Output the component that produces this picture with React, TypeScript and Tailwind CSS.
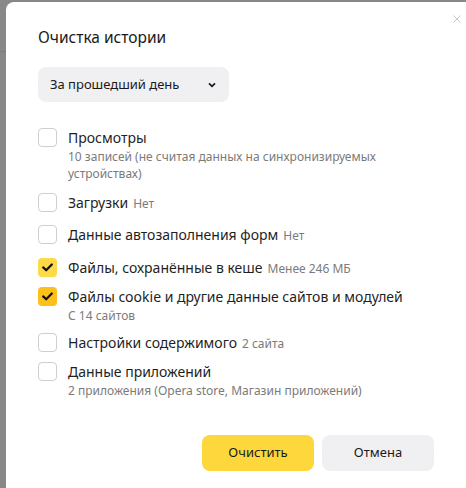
import React from "react";

type Row = {
  label: string;
  note?: string;
  sub?: string;
  checked?: boolean;
  tone?: string;
  mt: string;
};

const rows: Row[] = [
  {
    label: "Просмотры",
    sub: "10 записей (не считая данных на синхронизируемых устройствах)",
    mt: "mt-[26px]",
  },
  { label: "Загрузки", note: "Нет", mt: "mt-[11px]" },
  { label: "Данные автозаполнения форм", note: "Нет", mt: "mt-[12px]" },
  {
    label: "Файлы, сохранённые в кеше",
    note: "Менее 246 МБ",
    checked: true,
    tone: "bg-[#fed948]",
    mt: "mt-[13px]",
  },
  {
    label: "Файлы cookie и другие данные сайтов и модулей",
    sub: "С 14 сайтов",
    checked: true,
    tone: "bg-[#fdc01a]",
    mt: "mt-[9px]",
  },
  { label: "Настройки содержимого", note: "2 сайта", mt: "mt-[9px]" },
  {
    label: "Данные приложений",
    sub: "2 приложения (Opera store, Магазин приложений)",
    mt: "mt-[9px]",
  },
];

function Checkbox({ checked, tone }: { checked?: boolean; tone?: string }) {
  if (checked) {
    return (
      <span
        className={`flex size-[19px] shrink-0 items-center justify-center rounded-[4px] ${tone}`}
      >
        <svg width="11" height="9" viewBox="0 0 11 9" fill="none">
          <path
            d="M1.2 4.4 L4.2 7.3 L9.8 1.5"
            stroke="#111"
            strokeWidth="2.2"
            strokeLinecap="round"
            strokeLinejoin="round"
          />
        </svg>
      </span>
    );
  }
  return (
    <span className="size-[19px] shrink-0 rounded-[4px] border border-[#cfcfcf] bg-white" />
  );
}

export default function App() {
  return (
    <div className="relative h-[488px] w-[466px] overflow-hidden bg-[#888888] pl-[6px] pt-[2px] font-['Noto_Sans',sans-serif]">
      <div className="absolute left-0 top-[51px] h-px w-[6px] bg-[#7a7a7a]" />
      <div className="relative h-[500px] w-[470px] rounded-[8px] bg-white pl-[32px] pt-[24px]">
        <button className="absolute right-[12px] top-[10px] flex size-[14px] items-center justify-center">
          <svg width="8" height="8" viewBox="0 0 8 8">
            <path d="M0.5 0.5 L7.5 7.5 M7.5 0.5 L0.5 7.5" stroke="#c8c8c8" strokeWidth="1" />
          </svg>
        </button>

        <h1 className="text-[15.5px] leading-[22px] text-[#1a1a1a]">Очистка истории</h1>

        <div className="mt-[19px] flex h-[35px] w-[191px] items-center justify-between rounded-[8px] bg-[#f0f0f2] pl-[12px] pr-[13px] text-[13px] text-[#1a1a1a]">
          <span>За прошедший день</span>
          <svg width="8" height="6" viewBox="0 0 8 6" fill="none">
            <path d="M1 1.3 L4 4.3 L7 1.3" stroke="#1a1a1a" strokeWidth="1.8" />
          </svg>
        </div>

        <div className="flex flex-col">
          {rows.map((r) => (
            <div key={r.label} className={`flex gap-[11px] ${r.mt}`}>
              <Checkbox checked={r.checked} tone={r.tone} />
              <div className="w-[366px]">
                <div className="text-[14px] leading-[19px] text-[#1f1f1f]">
                  {r.label}
                  {r.note && (
                    <span className="ml-[5px] text-[12px] text-[#7b7b7b]">{r.note}</span>
                  )}
                </div>
                {r.sub && (
                  <div className="mt-[1px] text-[12px] leading-[17px] text-[#7b7b7b]">
                    {r.sub}
                  </div>
                )}
              </div>
            </div>
          ))}
        </div>

        <div className="mt-[36px] flex w-[396px] justify-end gap-[8px] text-[13px] text-[#1a1a1a]">
          <button className="h-[36px] w-[112px] rounded-[8px] bg-[#fdd73c]">Очистить</button>
          <button className="h-[36px] w-[112px] rounded-[8px] bg-[#f0f0f2]">Отмена</button>
        </div>
      </div>
    </div>
  );
}
